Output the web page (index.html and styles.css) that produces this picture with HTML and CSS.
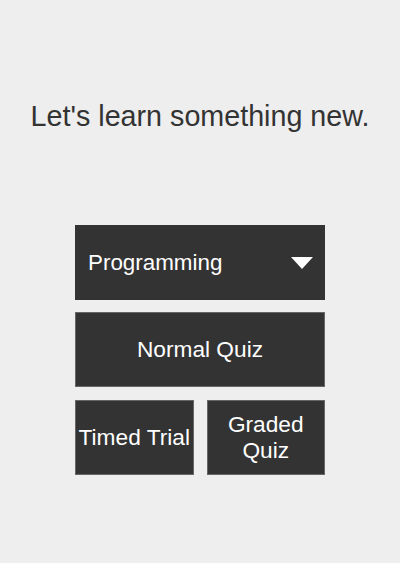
FILE: index.html
```html
<!DOCTYPE html>
<html>
<head>
<meta charset="utf-8">
<link rel="stylesheet" href="styles.css">
</head>
<body>
<main class="page">
  <h1 class="title">Let's learn something new.</h1>
  <div class="menu">
    <div class="select">
      <span>Programming</span>
      <svg class="caret" width="22" height="12" viewBox="0 0 22 12"><path d="M0 0H22L11 12Z" fill="#fff"/></svg>
    </div>
    <button class="btn">Normal Quiz</button>
    <div class="row">
      <button class="btn">Timed Trial</button>
      <button class="btn">Graded Quiz</button>
    </div>
  </div>
</main>
</body>
</html>
```
FILE: styles.css
```css
html, body {
  margin: 0;
  padding: 0;
  background: #eeeeee;
  height: 100%;
}
.page {
  display: flex;
  flex-direction: column;
  align-items: center;
  font-family: "Liberation Sans", Arial, sans-serif;
}
.title {
  margin: 97px 0 0 0;
  font-size: 28.7px;
  font-weight: normal;
  color: #333;
  line-height: 38px;
}
.menu {
  margin-top: 90px;
  width: 250px;
  display: flex;
  flex-direction: column;
  gap: 12px;
}
.select {
  height: 75px;
  background: #333;
  color: #fff;
  font-size: 22.4px;
  display: flex;
  align-items: center;
  justify-content: space-between;
  padding: 0 12px 0 13px;
  box-sizing: border-box;
}
.caret { margin-top: 1px; }
.btn {
  height: 75px;
  background: #333;
  color: #fff;
  font-family: "Liberation Sans", Arial, sans-serif;
  font-size: 22.7px;
  border: 1px solid #666;
  margin: 0;
  padding: 0 2px 2px;
  box-sizing: border-box;
  line-height: 26px;
}
.row {
  display: grid;
  grid-template-columns: 1fr 1fr;
  gap: 13px;
  margin-top: 1px;
}
```
